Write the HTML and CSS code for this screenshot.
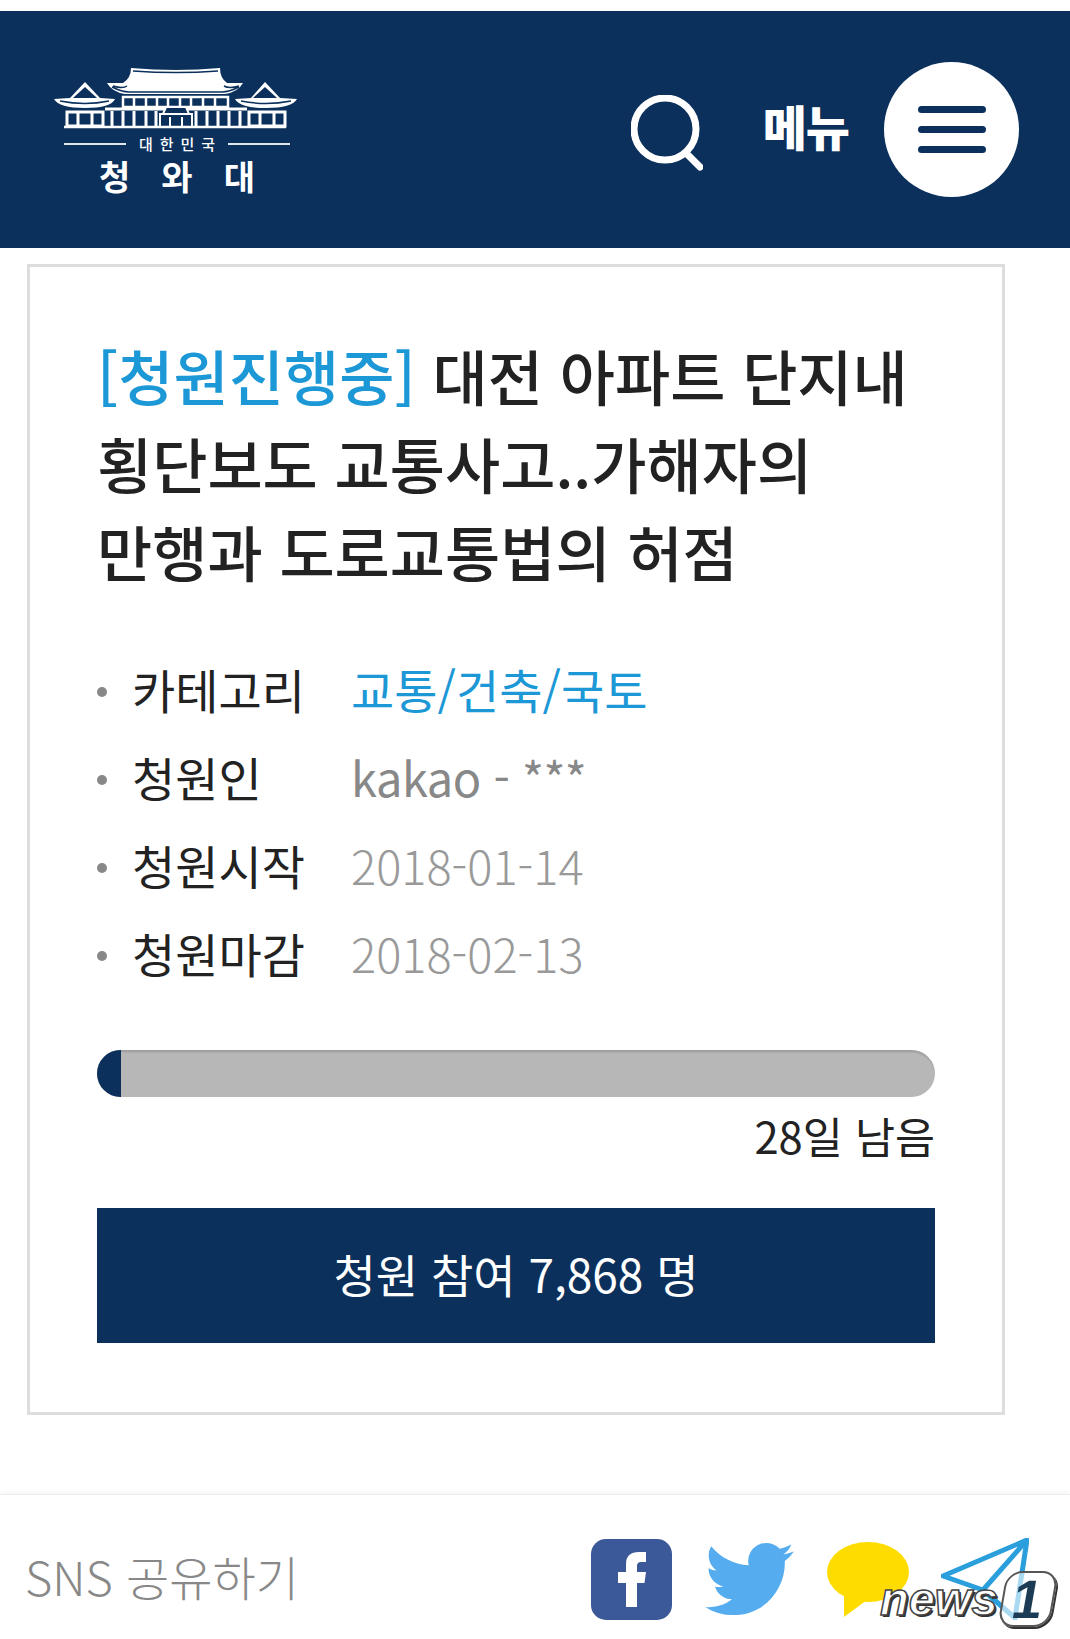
FILE: index.html
```html
<!DOCTYPE html>
<html lang="ko">
<head>
    <meta charset="UTF-8">
    <meta name="viewport" content="width=device-width, initial-scale=1.0">
    <title>청원</title>
    <link rel="stylesheet" href="styles.css">
</head>
<body>
    <header class="hdr">
        <a class="logo">
            <svg class="logo-art" viewBox="52 63 250 68" width="250" height="68" fill="none" stroke="#fff">
                <!-- main roof -->
                <path d="M131 67q45 4 89 0q0 10 7 15h16q-5 9-18 11h-100q-13-2-18-11h16q8-5 8-15z" fill="#fff" stroke="none"/>
                <path d="M133 70q43 3 85 0M113 85q10 3 14 0M224 85q5 3 15 0M112 86q10 5 17 5h93q7 0 17-5" stroke="#0b305c" stroke-width="1.500"/>
                <path d="M123 96h105v10h-105zM134 96v10M146 96v10M157 96v10M168 96v10M180 96v10M191 96v10M203 96v10M215 96v10" stroke-width="2.500"/>
                <!-- side roofs -->
                <path d="M54 98l16-1l15-16l15 16l15 1q-4 9-30 9t-31-9z" fill="#fff" stroke="none"/>
                <path d="M73 97l12-11l12 11z" fill="#0b305c" stroke="none"/>
                <path d="M60 100q25 5 49 0" stroke="#0b305c" stroke-width="1.500"/>
                <path d="M235 98l16-1l14-16l15 16l17 1q-5 9-31 9t-31-9z" fill="#fff" stroke="none"/>
                <path d="M253 97l12-11l12 11z" fill="#0b305c" stroke="none"/>
                <path d="M241 100q25 5 50 0" stroke="#0b305c" stroke-width="1.500"/>
                <!-- wings -->
                <path d="M67 111h36v14h-36zM78 111v14M92 111v14M249 111h36v14h-36zM260 111v14M274 111v14" stroke-width="3"/>
                <path d="M112 110v15M123 110v15M134 110v15M146 110v15M156 110v15M196 110v15M207 110v15M218 110v15M229 110v15M240 110v15M105 108h142" stroke-width="3"/>
                <path d="M163 113l3-7h20l3 7zM160 113h32v13h-32zM170 116v9M182 116v9" stroke-width="2" fill="#0b305c"/>
                <path d="M64 126h222" stroke-width="2.500"/>
            </svg>
            <span class="logo-sub"><i></i><b>대한민국</b><i></i></span>
            <span class="logo-name">청와대</span>
        </a>
        <div class="hdr-right">
            <svg class="ico-search" width="72" height="80" viewBox="0 0 72 80" fill="none" stroke="#fff" stroke-width="7" stroke-linecap="round">
                <circle cx="34" cy="34" r="31"/>
                <path d="M55 58l14 14"/>
            </svg>
            <span class="menu-txt">메뉴</span>
            <button class="menu-btn"><span></span><span></span><span></span></button>
        </div>
    </header>

    <section class="card">
        <h2 class="tit"><em>[청원진행중]</em> 대전 아파트 단지내<br>횡단보도 교통사고..가해자의<br>만행과 도로교통법의 허점</h2>
        <ul class="info">
            <li><span class="lbl">카테고리</span><span class="val blue">교통/건축/국토</span></li>
            <li><span class="lbl">청원인</span><span class="val name">kakao - ***</span></li>
            <li><span class="lbl">청원시작</span><span class="val light">2018-01-14</span></li>
            <li><span class="lbl">청원마감</span><span class="val light">2018-02-13</span></li>
        </ul>
        <div class="bar"><div class="bar-on"></div></div>
        <p class="left">28일 남음</p>
        <a class="join">청원 참여 7,868 명</a>
    </section>

    <footer class="sns">
        <span class="sns-txt">SNS 공유하기</span>
        <div class="sns-icons">
            <svg width="81" height="81" viewBox="0 0 81 81">
                <rect width="81" height="81" rx="15" fill="#3b5998"/>
                <path d="M35 68V44H27V33H35V25Q35 13 48 13H55V23H50Q46 23 46 27V33H55L53.500 44H46V68z" fill="#fff"/>
            </svg>
            <svg class="ico-tw" width="89" height="74" viewBox="0 2 24 20">
                <path fill="#55acee" d="M23.953 4.570a10 10 0 01-2.825.775 4.958 4.958 0 002.163-2.723c-.951.555-2.005.959-3.127 1.184a4.920 4.920 0 00-8.384 4.482C7.690 8.095 4.067 6.130 1.640 3.162a4.822 4.822 0 00-.666 2.475c0 1.710.870 3.213 2.188 4.096a4.904 4.904 0 01-2.228-.616v.060a4.923 4.923 0 003.946 4.827 4.996 4.996 0 01-2.212.085 4.936 4.936 0 004.604 3.417 9.867 9.867 0 01-6.102 2.105c-.390 0-.779-.023-1.170-.067a13.995 13.995 0 007.557 2.209c9.053 0 13.998-7.496 13.998-13.985 0-.210 0-.420-.015-.630A9.935 9.935 0 0024 4.590z"/>
            </svg>
            <svg class="ico-ka" width="82" height="75" viewBox="0 0 82 75">
                <ellipse cx="41" cy="30" rx="41" ry="30" fill="#ffdc00"/>
                <path d="M17 50L17 75L40 58z" fill="#ffdc00"/>
            </svg>
            <svg class="ico-pl" width="88" height="82" viewBox="0 0 88 82" fill="none" stroke="#2a9fdc" stroke-width="5" stroke-linejoin="round">
                <path d="M86 2L2 38L42 52z"/>
                <path d="M86 2L74 80L42 52"/>
            </svg>
        </div>
        <div class="wm"><span class="wm-news">news</span><span class="wm-one">1</span></div>
    </footer>
</body>
</html>
```

FILE: styles.css
```css
*{
    box-sizing: border-box;
}
html,body{
    margin: 0;padding: 0;
}
body{
    width: 1070px;
    height: 1639px;
    overflow: hidden;
    padding-top: 11px;
    background-color: #fff;
    font-family: "Noto Sans CJK KR", "Noto Sans", sans-serif;
    color: #222;
}

/* header */
.hdr{
    height: 237px;
    background-color: #0b305c;
    display: flex;
    align-items: center;
    justify-content: space-between;
    padding: 0 51px 0 52px;
}
.logo{
    width: 250px;
    display: flex;
    flex-direction: column;
    align-items: center;
    color: #fff;
}
.logo-art{
    display: block;
}
.logo-sub{
    width: 226px;
    display: flex;
    align-items: center;
    gap: 13px;
    height: 18px;
    margin-top: 3px;
    font-size: 15px;
}
.logo-sub i{
    flex: 1;
    height: 2px;
    background-color: #dfe6ee;
}
.logo-sub b{
    font-weight: 500;
    line-height: 18px;
    letter-spacing: 7px;
    margin-right: -7px;
}
.logo-name{
    margin-top: 3px;
    font-size: 34px;
    font-weight: 700;
    line-height: 40px;
    letter-spacing: 31px;
    margin-right: -31px;
}
.hdr-right{
    display: flex;
    align-items: center;
}
.ico-search{
    margin-right: 60px;
    margin-top: 10px;
}
.menu-txt{
    color: #fff;
    font-size: 48px;
    line-height: 60px;
    font-weight: 900;
    letter-spacing: -1px;
    margin: 0 35px 10px 0;
}
.menu-btn{
    width: 135px;
    height: 135px;
    border: 0;
    padding: 0;
    border-radius: 50%;
    background-color: #fff;
    display: flex;
    flex-direction: column;
    align-items: center;
    justify-content: center;
    gap: 13px;
}
.menu-btn span{
    display: block;
    width: 68px;
    height: 7px;
    border-radius: 4px;
    background-color: #0b305c;
}

/* card */
.card{
    width: 978px;
    margin: 16px 0 0 27px;
    border: 3px solid #ddd;
    padding: 64px 67px 69px;
}
.tit{
    margin: 0;
    font-size: 60px;
    line-height: 88px;
    font-weight: 500;
    color: #222;
}
.tit em{
    font-style: normal;
    font-weight: 500;
    color: #1c98d6;
}
.info{
    list-style: none;
    margin: 49px 0 0;
    padding: 0;
}
.info li{
    height: 88px;
    display: flex;
    align-items: center;
    font-size: 47px;
}
.info li::before{
    content: '';
    width: 10px;
    height: 10px;
    margin: 8px 25px 0 0;
    border-radius: 50%;
    background-color: #888;
}
.lbl{
    width: 219px;
    color: #222;
}
.val{
    color: #888;
}
.name{
    letter-spacing: -0.5px;
}
.blue{
    color: #1c98d6;
}
.light{
    color: #999;
    font-weight: 300;
}
.bar{
    height: 47px;
    margin-top: 54px;
    border-radius: 24px;
    background-color: #b7b7b7;
    box-shadow: inset 0 3px 2px -1px rgba(0,0,0,0.15);
    overflow: hidden;
}
.bar-on{
    width: 24px;
    height: 100%;
    background-color: #0b305c;
}
.left{
    margin: 9px 0 0;
    line-height: 60px;
    font-size: 43.5px;
    text-align: right;
    color: #222;
}
.join{
    display: flex;
    align-items: center;
    justify-content: center;
    height: 135px;
    margin-top: 42px;
    padding-bottom: 5px;
    background-color: #0b305c;
    color: #fff;
    font-size: 46px;
}

/* sns */
.sns{
    position: relative;
    height: 145px;
    margin-top: 79px;
    padding: 24px 41px 0 25px;
    border-top: 1px solid #eee;
    box-shadow: 0 -3px 4px rgba(0,0,0,0.03);
    display: flex;
    align-items: center;
    justify-content: space-between;
}
.sns-txt{
    margin-top: -8px;
    font-size: 47px;
    font-weight: 300;
    color: #888;
}
.sns-icons{
    display: flex;
    align-items: center;
}
.ico-tw{
    margin-left: 33px;
}
.ico-ka{
    margin-left: 33px;
}
.ico-pl{
    margin-left: 32px;
}
.wm{
    position: absolute;
    left: 880px;
    top: 76px;
    display: flex;
    align-items: center;
}
.wm-news{
    font-family: "Liberation Sans", sans-serif;
    font-size: 47px;
    font-weight: 700;
    font-style: italic;
    line-height: 50px;
    color: #fff;
    -webkit-text-stroke: 1.5px #444;
    text-shadow: 2px 2px 0 #333;
}
.wm-one{
    width: 52px;
    height: 56px;
    margin-left: 4px;
    border: 2px solid #555;
    border-radius: 16px;
    box-shadow: 2px 2px 0 #333;
    background-color: rgba(255,255,255,0.6);
    transform: skewX(-10deg);
    font-family: "Liberation Sans", sans-serif;
    font-size: 54px;
    font-weight: 700;
    line-height: 52px;
    text-align: center;
    color: #1c3c55;
}
```
